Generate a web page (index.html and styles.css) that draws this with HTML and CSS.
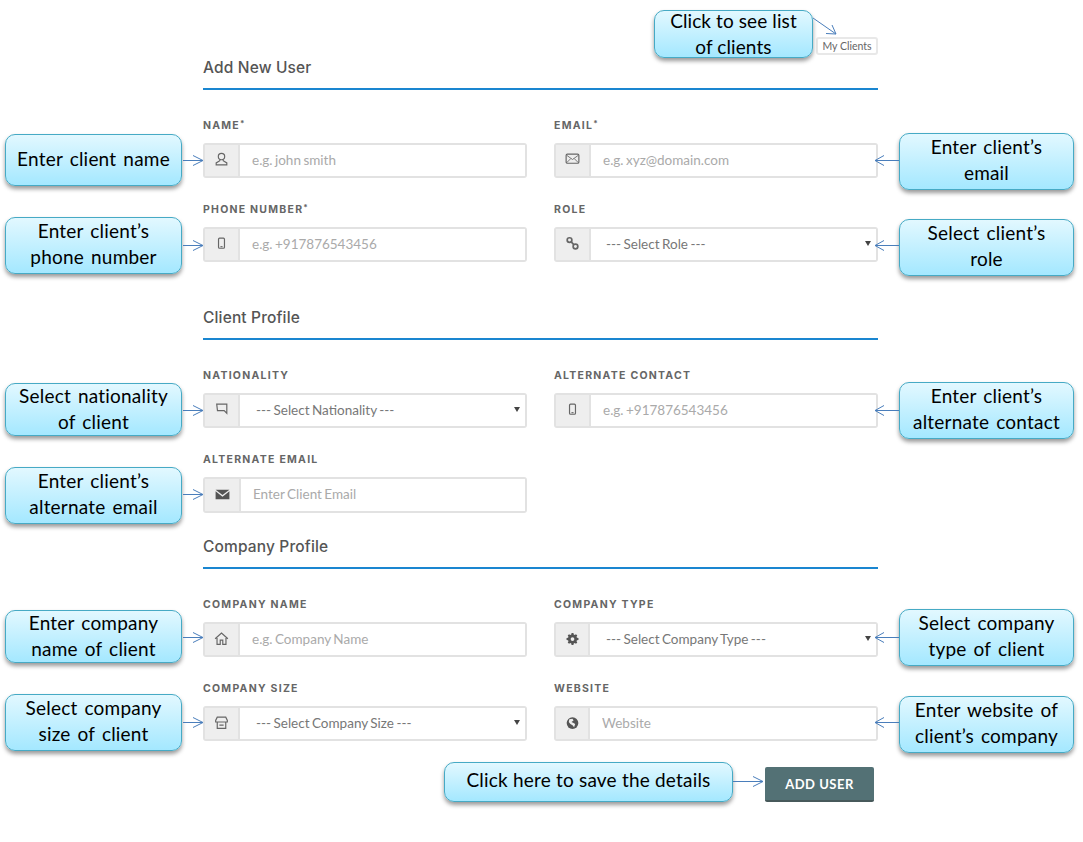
FILE: index.html
```html
<!DOCTYPE html>
<html lang="en">
<head>
    <meta charset="UTF-8">
    <meta name="viewport" content="width=device-width, initial-scale=1.0">
    <title>Add New User</title>
    <link rel="stylesheet" href="styles.css">
</head>
<body>
    <div class="page">
        <div class="top-bar"><a class="my-clients">My Clients</a></div>

        <h2 class="section-title">Add New User</h2>
        <div class="form-grid">
            <div class="field">
                <label>NAME<sup>*</sup></label>
                <div class="input-group">
                    <span class="addon"><svg viewBox="0 0 16 16"><circle cx="8" cy="5.200" r="3" class="line"/><path d="M6.400 8v1.200L3 11.200v1.800h10v-1.800L9.600 9.200V8" class="line"/></svg></span>
                    <input type="text" placeholder="e.g. john smith">
                </div>
            </div>
            <div class="field">
                <label>EMAIL<sup>*</sup></label>
                <div class="input-group">
                    <span class="addon"><svg viewBox="0 0 16 16"><rect x="2" y="3" width="12" height="8.500" rx="1.200" class="line"/><path d="M2.500 4 8 8l5.500-4M2.500 11l4-4M13.500 11l-4-4" class="line thin"/></svg></span>
                    <input type="text" placeholder="e.g. xyz@domain.com">
                </div>
            </div>
            <div class="field">
                <label>PHONE NUMBER<sup>*</sup></label>
                <div class="input-group">
                    <span class="addon"><svg viewBox="0 0 16 16"><rect x="5.200" y="3" width="5.600" height="9.500" rx="1" class="line"/><path d="M7 11h2" class="line"/></svg></span>
                    <input type="text" placeholder="e.g. +917876543456">
                </div>
            </div>
            <div class="field">
                <label>ROLE</label>
                <div class="input-group">
                    <span class="addon"><svg viewBox="0 0 16 16"><circle cx="5.200" cy="4.800" r="2.200" class="line bold"/><circle cx="10.800" cy="10.800" r="2.200" class="line bold"/><path d="M6.800 6.500l2.400 2.600" class="line bold"/></svg></span>
                    <div class="select-box"><select><option>--- Select Role ---</option></select></div>
                </div>
            </div>
        </div>

        <h2 class="section-title client-title">Client Profile</h2>
        <div class="form-grid">
            <div class="field">
                <label>NATIONALITY</label>
                <div class="input-group">
                    <span class="addon"><svg viewBox="0 0 16 16"><path d="M3.500 3h9.500v8.500L10.500 9H4.200z" class="line"/></svg></span>
                    <div class="select-box"><select class="wide-pad"><option>--- Select Nationality ---</option></select></div>
                </div>
            </div>
            <div class="field">
                <label>ALTERNATE CONTACT</label>
                <div class="input-group">
                    <span class="addon"><svg viewBox="0 0 16 16"><rect x="5.200" y="3" width="5.600" height="9.500" rx="1" class="line"/><path d="M7 11h2" class="line"/></svg></span>
                    <input type="text" placeholder="e.g. +917876543456">
                </div>
            </div>
            <div class="field">
                <label>ALTERNATE EMAIL</label>
                <div class="input-group tall">
                    <span class="addon wide"><svg viewBox="0 0 16 16"><path d="M1.500 3.500h13L8 8.500z" class="solid"/><path d="M1.500 5v7.500h13V5L8 10z" class="solid"/></svg></span>
                    <input type="text" placeholder="Enter Client Email">
                </div>
            </div>
        </div>

        <h2 class="section-title company-title">Company Profile</h2>
        <div class="form-grid">
            <div class="field">
                <label>COMPANY NAME</label>
                <div class="input-group">
                    <span class="addon"><svg viewBox="0 0 16 16"><path d="M2 8.200 8 2.800l6 5.400M3.800 7.500V13.500h3V9.500h2.400v4h3V7.500" class="line"/></svg></span>
                    <input type="text" placeholder="e.g. Company Name">
                </div>
            </div>
            <div class="field">
                <label>COMPANY TYPE</label>
                <div class="input-group">
                    <span class="addon narrow"><svg class="gear-icon" viewBox="-3 -3 22 22"><path d="M6.800 1h2.400l.4 1.900 1.300.6 1.600-1 1.700 1.700-1 1.600.6 1.300 1.900.4v2.400l-1.900.4-.6 1.300 1 1.600-1.700 1.700-1.600-1-1.300.6-.4 1.900H6.800l-.4-1.900-1.300-.6-1.600 1-1.700-1.700 1-1.600-.6-1.300-1.900-.4V7.500l1.900-.4.600-1.300-1-1.600 1.700-1.700 1.600 1 1.300-.6z" class="solid"/><circle cx="8" cy="8.700" r="2.400" fill="#eee"/></svg></span>
                    <div class="select-box"><select class="wide-pad"><option>--- Select Company Type ---</option></select></div>
                </div>
            </div>
            <div class="field">
                <label>COMPANY SIZE</label>
                <div class="input-group">
                    <span class="addon"><svg viewBox="0 0 16 16"><path d="M4 3h8l1.500 3v1.500h-11V6zM4 7.500V13.500h8V7.500M6 10.500h4" class="line"/></svg></span>
                    <div class="select-box"><select class="wide-pad"><option>--- Select Company Size ---</option></select></div>
                </div>
            </div>
            <div class="field">
                <label>WEBSITE</label>
                <div class="input-group">
                    <span class="addon narrow"><svg viewBox="0 0 16 16"><circle cx="8" cy="8.500" r="5.500" class="solid"/><path d="M5 5l3-.5 1 1.500-2 1.500 2 1 1.500 1-1 3-1.500-2-2-1-1.500-2z" fill="#eee"/></svg></span>
                    <input type="text" placeholder="Website">
                </div>
            </div>
        </div>

        <div class="form-actions"><button type="button" class="btn-add">ADD USER</button></div>
    </div>

    <!-- help callouts drawn over the form -->
    <div class="note note-list">Click to see list<br>of clients</div>
    <div class="note note-name">Enter client name</div>
    <div class="note note-phone">Enter client’s<br>phone number</div>
    <div class="note note-email">Enter client’s<br>email</div>
    <div class="note note-role">Select client’s<br>role</div>
    <div class="note note-nation">Select nationality<br>of client</div>
    <div class="note note-altcontact">Enter client’s<br>alternate contact</div>
    <div class="note note-altemail">Enter client’s<br>alternate email</div>
    <div class="note note-company">Enter company<br>name of client</div>
    <div class="note note-type">Select company<br>type of client</div>
    <div class="note note-size">Select company<br>size of client</div>
    <div class="note note-website">Enter website of<br>client’s company</div>
    <div class="note note-save">Click here to save the details</div>

    <svg class="arrows" viewBox="0 0 1083 842">
        <path d="M813 18 836 34M826 33.500 836 34 832 25"/>
        <path d="M183 160.500H203M193 155.500 203 160.500 193 165.500"/>
        <path d="M183 245.500H203M193 240.500 203 245.500 193 250.500"/>
        <path d="M183 410.500H203M193 405.500 203 410.500 193 415.500"/>
        <path d="M183 494.500H203M193 489.500 203 494.500 193 499.500"/>
        <path d="M183 637.500H203M193 632.500 203 637.500 193 642.500"/>
        <path d="M183 722.500H203M193 717.500 203 722.500 193 727.500"/>
        <path d="M899 160.500H875M884 155.500 875 160.500 884 165.500"/>
        <path d="M899 245.500H875M884 240.500 875 245.500 884 250.500"/>
        <path d="M899 410.500H875M884 405.500 875 410.500 884 415.500"/>
        <path d="M899 637.500H875M884 632.500 875 637.500 884 642.500"/>
        <path d="M899 722.500H875M884 717.500 875 722.500 884 727.500"/>
        <path d="M733 781.500H763M753 776.500 763 781.500 753 786.500"/>
    </svg>
</body>
</html>
```

FILE: styles.css
```css
body {
    margin: 0;
    background-color: #fff;
    font-family: "Lato", "Liberation Sans", sans-serif;
    color: #555;
}
.page {
    width: 675px;
    margin-left: 203px;
    padding-top: 37px;
}
.top-bar {
    display: flex;
    justify-content: flex-end;
}
.my-clients {
    box-sizing: border-box;
    height: 18px;
    width: 62px;
    border: 2px solid #e8e8e8;
    border-radius: 3px;
    font-size: 10.5px;
    line-height: 14px;
    text-align: center;
    color: #666;
}
.section-title {
    margin: 0 0 28px;
    padding-bottom: 8px;
    border-bottom: 2px solid #1a86d0;
    font-family: "Inter", sans-serif;
    font-size: 15.5px;
    line-height: 25px;
    font-weight: 500;
    letter-spacing: 0.15px;
    color: #555;
}
.client-title {
    margin-top: 43px;
}
.company-title {
    margin-top: 21px;
}
.form-grid {
    display: grid;
    grid-template-columns: 324px 324px;
    column-gap: 27px;
    row-gap: 24px;
}
label {
    display: block;
    height: 14px;
    margin-bottom: 11px;
    font-family: "Inter", sans-serif;
    font-size: 10.500px;
    line-height: 16px;
    font-weight: 700;
    letter-spacing: 1.25px;
    color: #666;
}
label sup {
    font-size: 8px;
    line-height: 0;
    vertical-align: 3px;
    letter-spacing: 0;
}
.input-group {
    display: flex;
    height: 35px;
    box-sizing: border-box;
    border: 2px solid #e2e2e2;
    border-radius: 3px;
}
.input-group.tall {
    height: 36px;
}
.addon {
    flex: none;
    width: 35px;
    display: flex;
    align-items: center;
    justify-content: center;
    background-color: #eee;
    border-right: 2px solid #e2e2e2;
    box-sizing: border-box;
}
.addon.wide {
    width: 36px;
}
.addon.narrow {
    width: 34px;
}
.addon svg {
    width: 17px;
    height: 17px;
    margin-top: -2px;
}
.line {
    fill: none;
    stroke: #666;
    stroke-width: 1.1;
}
.line.thin {
    stroke-width: 0.8;
}
.line.bold {
    stroke-width: 1.6;
}
.solid {
    fill: #555;
}
input, select {
    flex: 1;
    min-width: 0;
    width: 100%;
    height: 100%;
    box-sizing: border-box;
    border: none;
    outline: none;
    background: #fff;
    font-family: "Lato", sans-serif;
    font-size: 13.5px;
    word-spacing: -1px;
}
input {
    padding: 0 0 2px 12px;
}
input::placeholder {
    color: #aaa;
    opacity: 1;
}
.select-box {
    flex: 1;
    position: relative;
}
.select-box::after {
    content: "";
    position: absolute;
    right: 5px;
    top: 12px;
    border-left: 3px solid transparent;
    border-right: 3px solid transparent;
    border-top: 5px solid #444;
}
select {
    appearance: none;
    display: block;
    padding: 0 0 2px 15px;
    color: #777;
}
select.wide-pad {
    padding-left: 16px;
}
.form-actions {
    display: flex;
    justify-content: flex-end;
    margin-top: 26px;
    padding-right: 4px;
}
.btn-add {
    width: 109px;
    height: 35px;
    border: none;
    border-bottom: 2px solid #47595b;
    border-radius: 2px;
    background-color: #537175;
    color: #fff;
    font-family: "Lato", sans-serif;
    font-size: 13px;
    font-weight: 700;
    letter-spacing: 0.5px;
}

/* callouts */
.note {
    position: absolute;
    box-sizing: border-box;
    display: flex;
    align-items: center;
    justify-content: center;
    text-align: center;
    padding-bottom: 3px;
    border: 1px solid #46aac5;
    border-radius: 10px;
    background: linear-gradient(#e2f8ff, #a4e8ff);
    box-shadow: 0 3px 4px rgba(0, 0, 0, 0.4);
    font-family: "Lato", sans-serif;
    font-size: 19px;
    line-height: 26px;
    letter-spacing: 0.2px;
    word-spacing: 2px;
    color: #000;
}
.note-list { left: 654px; top: 10px; width: 159px; height: 48px; padding-bottom: 0; letter-spacing: 0.1px; word-spacing: 0; }
.note-name { left: 5px; top: 134px; width: 177px; height: 52px; padding-bottom: 2px; }
.note-phone { left: 5px; top: 217px; width: 177px; height: 57px; }
.note-email { left: 899px; top: 133px; width: 175px; height: 57px; }
.note-role { left: 899px; top: 219px; width: 175px; height: 57px; }
.note-nation { left: 5px; top: 383px; width: 177px; height: 53px; padding-bottom: 2px; }
.note-altcontact { left: 899px; top: 382px; width: 175px; height: 57px; }
.note-altemail { left: 5px; top: 467px; width: 177px; height: 57px; }
.note-company { left: 5px; top: 610px; width: 177px; height: 53px; padding-bottom: 2px; }
.note-type { left: 899px; top: 609px; width: 175px; height: 57px; }
.note-size { left: 5px; top: 694px; width: 177px; height: 57px; }
.note-website { left: 899px; top: 696px; width: 175px; height: 57px; }
.note-save { left: 444px; top: 762px; width: 289px; height: 40px; padding-bottom: 4px; word-spacing: 0; }

.arrows {
    position: absolute;
    left: 0;
    top: 0;
    width: 1083px;
    height: 842px;
    pointer-events: none;
}
.arrows path {
    fill: none;
    stroke: #4a7ebb;
    stroke-width: 1;
}
```
